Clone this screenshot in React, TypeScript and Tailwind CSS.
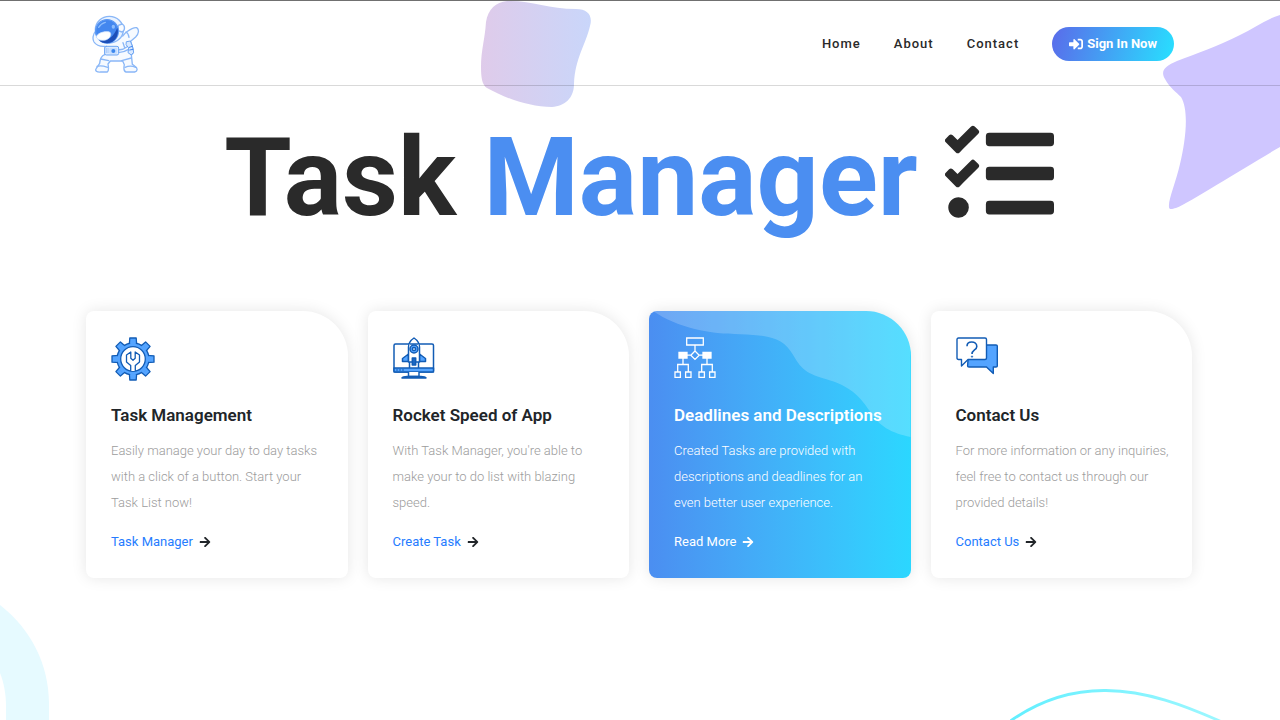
import type { ReactNode } from "react";
import { FaArrowRight, FaSignInAlt, FaTasks } from "react-icons/fa";

function AstronautLogo() {
  return (
    <svg viewBox="66 39 144 183" className="h-[61px] w-12" fill="none" stroke="#8ab7f7" strokeWidth="4" strokeLinecap="round" strokeLinejoin="round" aria-hidden="true">
      <path d="M78 92C68 103 67 118 72 126C80 138 95 140 106 139L104 164C94 168 90 178 89 190L79 205C74 212 80 217 92 216H112C118 212 115 198 114 192L121 183H158L163 194C161 204 160 214 168 216H194C205 213 202 203 195 199L187 193L184 164L190 158L188 143L182 124L197 111C207 101 208 88 200 83C188 81 177 91 167 98L158 108" fill="#f6faff" />
      <ellipse cx="118" cy="89" rx="42" ry="40" fill="#eaf3ff" />
      <path d="M156 72C166 76 166 91 156 96L144 92L145 76Z" fill="#f8fbff" />
      <ellipse cx="111" cy="94" rx="34" ry="35" fill="#4387ef" stroke="#5b98f3" />
      <path d="M142 83C149 104 136 128 112 130C99 130 92 126 87 121C114 125 130 111 142 83Z" fill="#1d4fb8" stroke="none" />
      <path d="M79 111C81 99 104 92 119 96C127 103 120 116 107 120C93 123 81 119 79 111Z" fill="#fff" stroke="#c9defc" strokeWidth="2" />
      <path d="M86 82C91 73 98 69 106 67" stroke="#8cbcfc" strokeWidth="4" />
      <ellipse cx="130" cy="80" rx="5" ry="6" fill="#8cbcfc" stroke="none" />
      <path d="M168 96C172 98 176 105 177 112M92 177L116 182M155 182L184 174M81 199C91 196 104 199 113 202M165 202C176 197 187 197 197 202M146 149C157 150 164 146 170 141M146 157C158 158 166 154 174 149M159 128L164 143" />
      <rect x="104" y="139" width="42" height="26" rx="5" fill="#dcebff" stroke="#6da5f3" strokeWidth="3" />
      <rect x="118" y="144" width="23" height="17" rx="3" fill="#c5deff" stroke="none" />
      <circle cx="130" cy="153" r="6" fill="#3c88ee" stroke="none" />
      <path d="M109 145V158M114 145V158" strokeWidth="2" />
      <path d="M170 125L181 123L187 138L191 157L184 165L174 158L176 144L169 135Z" fill="#d9e9ff" stroke="#6da5f3" strokeWidth="3" />
      <path d="M178 142L187 139M179 150L189 148" stroke="#4387ef" strokeWidth="3" />
    </svg>
  );
}

function GearIcon() {
  const teeth = [0, 45, 90, 135, 180, 225, 270, 315];
  return (
    <svg viewBox="0 0 44 44" className="size-11" stroke="#125cb5" strokeWidth="1.3" strokeLinejoin="round" aria-hidden="true">
      <g fill="#54a4ff">
        {teeth.map((angle) => (
          <path key={angle} d="M18.3 8L18.8 1H25.2L25.7 8" transform={`rotate(${angle} 22 22)`} />
        ))}
        <circle cx="22" cy="22" r="16" />
        {teeth.map((angle) => (
          <path key={angle} d="M19.2 9V5H24.8V9Z" stroke="none" transform={`rotate(${angle} 22 22)`} />
        ))}
      </g>
      <circle cx="22" cy="22" r="12.3" fill="#fff" />
      <path d="M19.7 34V28.5L15.5 25V18L19.8 15V21.2L22 23.2L24.2 21.2V15L28.5 18V25L24.3 28.5V34" fill="#fff" />
    </svg>
  );
}

function RocketIcon() {
  return (
    <svg viewBox="0 0 44 44" className="size-11" fill="#fff" stroke="#125cb5" strokeWidth="1.5" strokeLinejoin="round" aria-hidden="true">
      <rect x="1" y="7" width="39.5" height="28" rx="1.5" />
      <path d="M1 31H40.5V35H1Z" fill="#54a4ff" />
      <path d="M3 33H11" strokeWidth="1.2" strokeDasharray="2 1" />
      <path d="M15.5 35V39.5H26V35" />
      <path d="M9 41C10 39.5 12 39.5 14 39.5H28C30 39.5 32 39.5 33 41Z" fill="#54a4ff" />
      <path d="M16.5 25V31M25.5 25V31" />
      <path d="M15.5 17L9.5 21.5V24.5H15.5ZM26.5 17L32.5 21.5V24.5H26.5Z" fill="#54a4ff" />
      <path d="M15.5 25V10C15.5 6 18 3 21 1C24 3 26.5 6 26.5 10V25Z" />
      <path d="M17 7H25" />
      <circle cx="21" cy="12" r="4" fill="#54a4ff" />
      <circle cx="21" cy="12" r="1.6" fill="#fff" />
      <path d="M19.3 21H22.7V28H19.3Z" fill="#1d68c4" />
    </svg>
  );
}

function FlowIcon() {
  return (
    <svg viewBox="0 0 44 44" className="size-11" fill="none" stroke="#fff" strokeWidth="1.3" aria-hidden="true">
      <path d="M12.7 1H29.3V8H12.7ZM21 8V14M21 14L25.2 18.2L21 22.4L16.8 18.2ZM13 18.2H16.8M25.2 18.2H29M9 21V27.5M33 21V27.5M3.7 35V27.5H14.3V35M27.7 35V27.5H38.3V35" />
      <path d="M1 35H6.4V40.4H1ZM11.6 35H17V40.4H11.6ZM25 35H30.4V40.4H25ZM35.6 35H41V40.4H35.6Z" />
      <path d="M5 15.5H13V21H5ZM29 15.5H37V21H29Z" fill="#fff" />
    </svg>
  );
}

function ChatIcon() {
  return (
    <svg viewBox="0 0 44 44" className="size-11" stroke="#125cb5" strokeWidth="1.4" strokeLinejoin="round" aria-hidden="true">
      <path d="M13 8H40C41 8 41.3 8.4 41.3 9V29C41.3 29.7 41 30 40 30H37.3V36.5L30.5 30H13C12 30 11.6 29.5 11.6 29Z" fill="#54a4ff" />
      <path d="M2.5 1H29C30 1 30.5 1.5 30.5 2.5V21C30.5 22 30 22.5 29 22.5H12L5.5 29V22.5H2.5C1.5 22.5 1 22 1 21V2.5C1 1.5 1.5 1 2.5 1Z" fill="#fff" />
      <path d="M11 9.2C11 6.5 13 5 15.7 5C18.5 5 20.8 6.7 20.8 9.4C20.8 13 16 13 16 17" fill="none" strokeWidth="1.6" />
      <circle cx="16" cy="19.6" r="0.7" fill="#125cb5" strokeWidth="0.7" />
    </svg>
  );
}

interface Service {
  title: string;
  text: string;
  link: string;
  icon: ReactNode;
  featured?: boolean;
}

const services: Service[] = [
  {
    title: "Task Management",
    text: "Easily manage your day to day tasks with a click of a button. Start your Task List now!",
    link: "Task Manager",
    icon: <GearIcon />,
  },
  {
    title: "Rocket Speed of App",
    text: "With Task Manager, you're able to make your to do list with blazing speed.",
    link: "Create Task",
    icon: <RocketIcon />,
  },
  {
    title: "Deadlines and Descriptions",
    text: "Created Tasks are provided with descriptions and deadlines for an even better user experience.",
    link: "Read More",
    icon: <FlowIcon />,
    featured: true,
  },
  {
    title: "Contact Us",
    text: "For more information or any inquiries, feel free to contact us through our provided details!",
    link: "Contact Us",
    icon: <ChatIcon />,
  },
];

function ServiceCard({ title, text, link, icon, featured }: Service) {
  return (
    <article
      className={
        featured
          ? "relative overflow-hidden rounded-lg rounded-tr-[45px] bg-linear-to-r from-[#4b8ef1] to-[#2bd7ff] pt-[26px] pr-5 pb-6 pl-[25px] text-white shadow-[0_0_15px_rgba(0,0,0,0.1)]"
          : "relative overflow-hidden rounded-lg rounded-tr-[45px] bg-white pt-[26px] pr-5 pb-6 pl-[25px] text-[#212529] shadow-[0_0_15px_rgba(0,0,0,0.1)]"
      }
    >
      {featured && (
        <svg viewBox="0 0 261 126" preserveAspectRatio="none" className="absolute inset-x-0 top-0 h-[127px] w-full" aria-hidden="true">
          <path d="M4 0C29 17 61 23 91 23C119 24 134 26 144 44C153 60 160 63 181 69C203 76 212 87 220 99C230 115 242 121 261 125V0Z" fill="#fff" fillOpacity="0.2" />
        </svg>
      )}
      <div className="relative">
        {icon}
        <h2 className="mt-[22px] text-[17px] leading-6 font-semibold whitespace-nowrap">{title}</h2>
        <p className={featured ? "mt-[11px] text-[13px] leading-[26px] font-light" : "mt-[11px] text-[13px] leading-[26px] font-light text-[#9c9c9c]"}>{text}</p>
        <div className="mt-3.5 flex items-center gap-1.5 text-[13px] leading-6">
          <a href="#" className={featured ? "text-white" : "text-[#257cff]"}>
            {link}
          </a>
          <FaArrowRight className="size-3" aria-hidden="true" />
        </div>
      </div>
    </article>
  );
}

function Decorations() {
  return (
    <div className="pointer-events-none absolute inset-0 overflow-hidden" aria-hidden="true">
      <svg viewBox="480 0 112 108" className="absolute top-0 left-[480px] h-[108px] w-28">
        <defs>
          <linearGradient id="blob">
            <stop offset="0" stopColor="#dfcbea" />
            <stop offset="1" stopColor="#c9d6fa" />
          </linearGradient>
        </defs>
        <path d="M507 1C530 0 548 9 576 9C588 9 593 16 590 26C586 44 575 58 574 84C574 98 565 106 552 107C529 107 505 98 487 88C482 85 481 77 481 67C481 50 485 39 486 22C488 9 496 2 507 1Z" fill="url(#blob)" />
      </svg>
      <svg viewBox="1160 10 120 204" className="absolute top-[10px] right-0 h-[204px] w-[120px]">
        <path d="M1280 15C1266 19 1253 29 1240 35C1218 46 1196 54 1177 61C1165 66 1160 71 1165 79C1170 88 1176 92 1181 97C1189 110 1186 139 1180 164C1176 182 1168 200 1169 207C1169 210 1172 209 1176 208C1192 201 1245 167 1280 147Z" fill="#cfc6ff" />
      </svg>
      <svg viewBox="0 600 50 120" className="absolute bottom-0 left-0 h-[120px] w-[50px]">
        <path d="M0 605C31 629 49 665 49 703V720H6V707C6 694 4 683 0 673Z" fill="#e6faff" />
      </svg>
      <svg viewBox="1010 685 212 35" className="absolute right-[58px] bottom-0 h-[35px] w-[212px]">
        <defs>
          <linearGradient id="arc">
            <stop offset="0" stopColor="#62efff" />
            <stop offset="1" stopColor="#9df7ff" />
          </linearGradient>
        </defs>
        <path d="M1009 722C1037 702 1068 690 1106 690.5C1147 691 1184 705 1222 722" fill="none" stroke="url(#arc)" strokeWidth="2.8" />
      </svg>
    </div>
  );
}

export default function App() {
  return (
    <div className="relative min-h-screen overflow-hidden bg-white font-[Roboto,sans-serif] text-[#2a2a2a]">
      <Decorations />
      <header className="relative border-t border-b border-t-[#707070] border-b-black/15 pr-0.5">
        <div className="mx-auto flex h-[84px] max-w-[1106px] items-center justify-between pr-[18px] pl-1.5">
          <a href="#" aria-label="Task Manager home">
            <AstronautLogo />
          </a>
          <nav className="flex items-center gap-[33px] pt-px text-[13px] font-medium tracking-[1px]">
            <a href="#">Home</a>
            <a href="#">About</a>
            <a href="#">Contact</a>
            <a href="#" className="flex h-[34px] items-center gap-1 rounded-full bg-linear-[105deg] from-[#5a6bea] to-[#28e0ff] px-[17px] font-bold tracking-normal text-white">
              <FaSignInAlt className="size-3.5" aria-hidden="true" />
              Sign In Now
            </a>
          </nav>
        </div>
      </header>
      <main className="relative pr-0.5">
        <h1 className="pt-[27px] text-center text-[109px] leading-[130px] font-bold whitespace-nowrap">
          Task <span className="text-[#4b8ef1]">Manager</span> <FaTasks className="inline size-[109px] align-[-13px]" aria-hidden="true" />
        </h1>
        <section className="mx-auto mt-[68px] grid max-w-[1106px] grid-cols-4 gap-5">
          {services.map((service) => (
            <ServiceCard key={service.title} {...service} />
          ))}
        </section>
      </main>
    </div>
  );
}
